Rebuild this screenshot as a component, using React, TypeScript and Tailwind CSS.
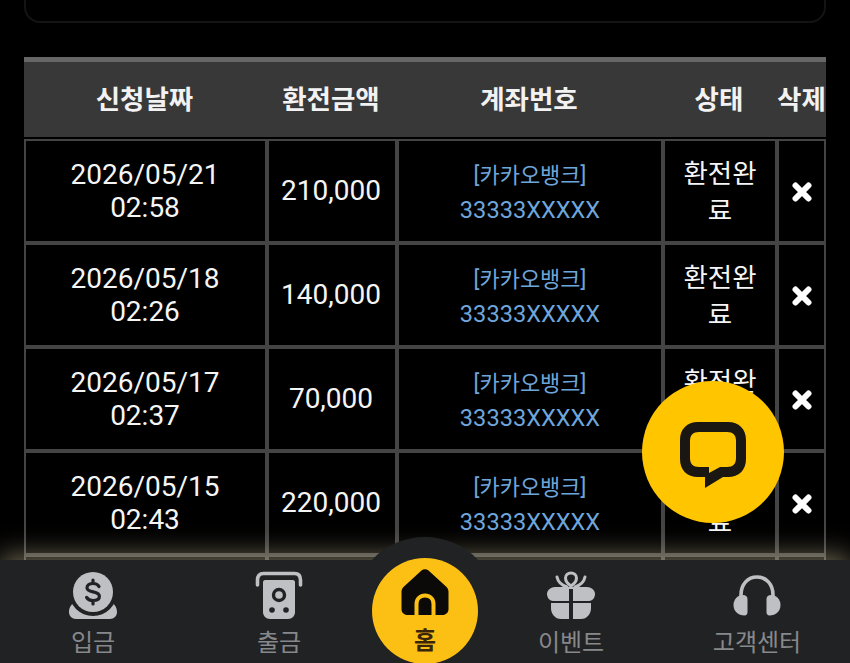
const rows = [
  { date: "2026/05/21", time: "02:58", amount: "210,000" },
  { date: "2026/05/18", time: "02:26", amount: "140,000" },
  { date: "2026/05/17", time: "02:37", amount: "70,000" },
  { date: "2026/05/15", time: "02:43", amount: "220,000" },
]

const headers = ["신청날짜", "환전금액", "계좌번호", "상태", "삭제"]
const fontStack = "font-['Roboto','Noto_Sans_CJK_KR',sans-serif]"
const cell = "border-2 border-[#444444] p-0 text-center align-middle"

function DepositIcon() {
  return (
    <svg width="48" height="48" viewBox="0 0 48 48" aria-hidden="true">
      <path fill="#bfc0c3" d="M6 32c1 0 2 1 3 2h30c1-1 2-2 3-2 3 0 6 4 6 9 0 4-3 7-7 7H7c-4 0-7-3-7-7 0-5 3-9 6-9Z" />
      <circle cx="24" cy="21" r="24" fill="#212224" />
      <circle cx="24" cy="21" r="20" fill="#bfc0c3" />
      <path
        fill="none"
        stroke="#212224"
        strokeWidth="3.2"
        strokeLinecap="round"
        d="M30 15.500c-1-2-3.200-3-6-3-3.400 0-6 1.600-6 4.300 0 5.600 12.400 2.600 12.400 8.400 0 2.800-2.800 4.300-6.400 4.300-2.800 0-5.200-1-6.400-3.100M24 9v3.500M24 29.500V33"
      />
    </svg>
  )
}

function WithdrawIcon() {
  return (
    <svg width="48" height="48" viewBox="0 0 48 48" aria-hidden="true">
      <path fill="none" stroke="#bfc0c3" strokeWidth="3.6" strokeLinecap="round" d="M2.500 14V9c0-4 2-6.500 6-6.500h31c4 0 6 2.500 6 6.500v5" />
      <path fill="#bfc0c3" d="M10 9h28c1 0 2 1 2 2v30c0 4-3 7-7 7H15c-4 0-7-3-7-7V11c0-1 1-2 2-2Z" />
      <circle cx="24" cy="24" r="5.500" fill="none" stroke="#212224" strokeWidth="3.4" />
      <circle cx="17" cy="39" r="2.800" fill="#212224" />
      <circle cx="31" cy="39" r="2.800" fill="#212224" />
    </svg>
  )
}

function HomeIcon() {
  return (
    <svg width="48" height="48" viewBox="0 0 48 48" aria-hidden="true">
      <path fill="#0b0a08" d="M20.500 2.500c2-1.800 5-1.800 7 0l17.500 16c1.800 1.600 2.500 3.200 2.500 5.500V41c0 3.500-2.500 6-6 6H6.500C3 47 .5 44.500.5 41V24c0-2.300.7-3.900 2.500-5.500Z" />
      <path fill="none" stroke="#fcc015" strokeWidth="4" d="M15.500 47V36c0-5 3.500-8.500 8.500-8.500s8.500 3.500 8.500 8.500v11" />
    </svg>
  )
}

function GiftIcon() {
  return (
    <svg width="48" height="48" viewBox="0 0 48 48" aria-hidden="true">
      <path fill="none" stroke="#bfc0c3" strokeWidth="3" strokeLinecap="round" d="M10 6c1 5 4 8 10 10M38 6c-1 5-4 8-10 10" />
      <path fill="none" stroke="#bfc0c3" strokeWidth="3" d="M24 15c-3-2-5.500-5-5.500-8 0-3 2.500-5 5.500-5s5.500 2 5.500 5c0 3-2.500 6-5.500 8Z" />
      <path fill="#bfc0c3" d="M8 16h32c4 0 8 3 8 7 0 3-2 7-6 7H6c-4 0-6-4-6-7 0-4 4-7 8-7Z" />
      <path fill="#bfc0c3" d="M4 32h40v5c0 6-4 11-10 11H14C8 48 4 43 4 37Z" />
      <rect x="22" y="18" width="4" height="30" fill="#212224" />
    </svg>
  )
}

function HeadsetIcon() {
  return (
    <svg width="48" height="48" viewBox="0 0 48 48" aria-hidden="true">
      <path fill="none" stroke="#bfc0c3" strokeWidth="3.6" d="M8 27V24C8 13 15 6 24 6s16 7 16 18v3" />
      <path fill="#bfc0c3" d="M10 24c2.500 0 4.500 1.500 4.500 4v13c0 2-1 3.500-3 3.500C5 44.500 .5 40 .5 34S5 24 10 24Z" />
      <path fill="#bfc0c3" d="M38 24c-2.500 0-4.500 1.500-4.500 4v13c0 2 1 3.500 3 3.500 6.500 0 11-4.500 11-10.500S43 24 38 24Z" />
    </svg>
  )
}

function NavItem({ label, icon }: { label: string; icon: React.ReactNode }) {
  return (
    <div className="flex w-[120px] flex-col items-center">
      {icon}
      <span className="mt-[6px] whitespace-nowrap text-[24px] leading-[36px] text-[#87888b]">{label}</span>
    </div>
  )
}

export default function App() {
  return (
    <div className={`relative h-[663px] w-[850px] overflow-hidden bg-black ${fontStack}`}>
      <div className="mx-[24px] h-[23px] rounded-b-[16px] border-x-2 border-b-2 border-[#141414]" />

      <table className="ml-[24px] mt-[34px] w-[802px] table-fixed border-separate border-spacing-0 text-[#f5f5f5]">
        <colgroup>
          <col className="w-[243px]" />
          <col className="w-[130px]" />
          <col className="w-[266px]" />
          <col className="w-[114px]" />
          <col className="w-[49px]" />
        </colgroup>
        <thead>
          <tr>
            {headers.map((h) => (
              <th
                key={h}
                className="h-[82px] whitespace-nowrap border-t-[5px] border-b-2 border-t-[#666666] border-b-black bg-[#383838] p-0 pr-[2px] text-center text-[26.500px] font-bold text-[#f2f2f2]"
              >
                {h}
              </th>
            ))}
          </tr>
        </thead>
        <tbody>
          {rows.map((r) => (
            <tr key={r.date} className="h-[104px]">
              <td className={`${cell} pr-[1px] text-[28px] leading-[33px]`}>
                {r.date}
                <br />
                {r.time}
              </td>
              <td className={`${cell} pr-[2px] text-[28px]`}>{r.amount}</td>
              <td className={`${cell} pt-[3px] text-[#6ea6dc]`}>
                <div className="text-[22px] leading-[34px]">[카카오뱅크]</div>
                <div className="text-[23.600px] leading-[34px]">33333XXXXX</div>
              </td>
              <td className={`${cell} px-[12px] pt-[1px] text-[26.500px] leading-[37px]`}>환전완료</td>
              <td className={cell}>
                <svg width="20" height="20" viewBox="0 0 20 20" className="mx-auto mt-[2px]" aria-hidden="true">
                  <path stroke="#ffffff" strokeWidth="6" strokeLinecap="round" d="M3.500 3.500l13 13M16.500 3.500l-13 13" />
                </svg>
              </td>
            </tr>
          ))}
          {/* fifth row only shows its top edge above the nav */}
          <tr className="h-[104px]">
            <td className={cell} />
            <td className={cell} />
            <td className={cell} />
            <td className={cell} />
            <td className={cell} />
          </tr>
        </tbody>
      </table>

      <button className="absolute left-[642px] top-[381px] flex h-[142px] w-[142px] items-center justify-center rounded-full bg-[#ffc600]">
        <svg width="66" height="66" viewBox="0 0 66 66" className="mt-[6px]" aria-hidden="true">
          <path
            fill="#1a1712"
            fillRule="evenodd"
            d="M18 0h30c11 0 18 7 18 18v19c0 11-7 18-18 18H43L25 66V55h-7C7 55 0 48 0 37V18C0 7 7 0 18 0Zm1 10c-6 0-9 3-9 9v17c0 6 3 9 9 9h10v6l11-6h7c6 0 9-3 9-9V19c0-6-3-9-9-9Z"
          />
        </svg>
      </button>

      <nav className="absolute inset-x-0 bottom-0 h-[103px] bg-[#212224] shadow-[0_-4px_26px_rgba(255,240,190,0.45)]">
        <div className="absolute left-[352px] top-[-23px] h-[146px] w-[146px] rounded-full bg-[#212224]" />
        <div className="absolute left-[372px] top-[-2px] flex h-[106px] w-[106px] flex-col items-center rounded-full bg-[#fcc015] pt-[10px]">
          <HomeIcon />
          <span className="mt-[9px] text-[24px] font-bold leading-[32px] text-[#3a2508]">홈</span>
        </div>
        <div className="absolute left-[33px] top-[11px]">
          <NavItem label="입금" icon={<DepositIcon />} />
        </div>
        <div className="absolute left-[219px] top-[11px]">
          <NavItem label="출금" icon={<WithdrawIcon />} />
        </div>
        <div className="absolute left-[511px] top-[11px]">
          <NavItem label="이벤트" icon={<GiftIcon />} />
        </div>
        <div className="absolute left-[697px] top-[11px]">
          <NavItem label="고객센터" icon={<HeadsetIcon />} />
        </div>
      </nav>
    </div>
  )
}
